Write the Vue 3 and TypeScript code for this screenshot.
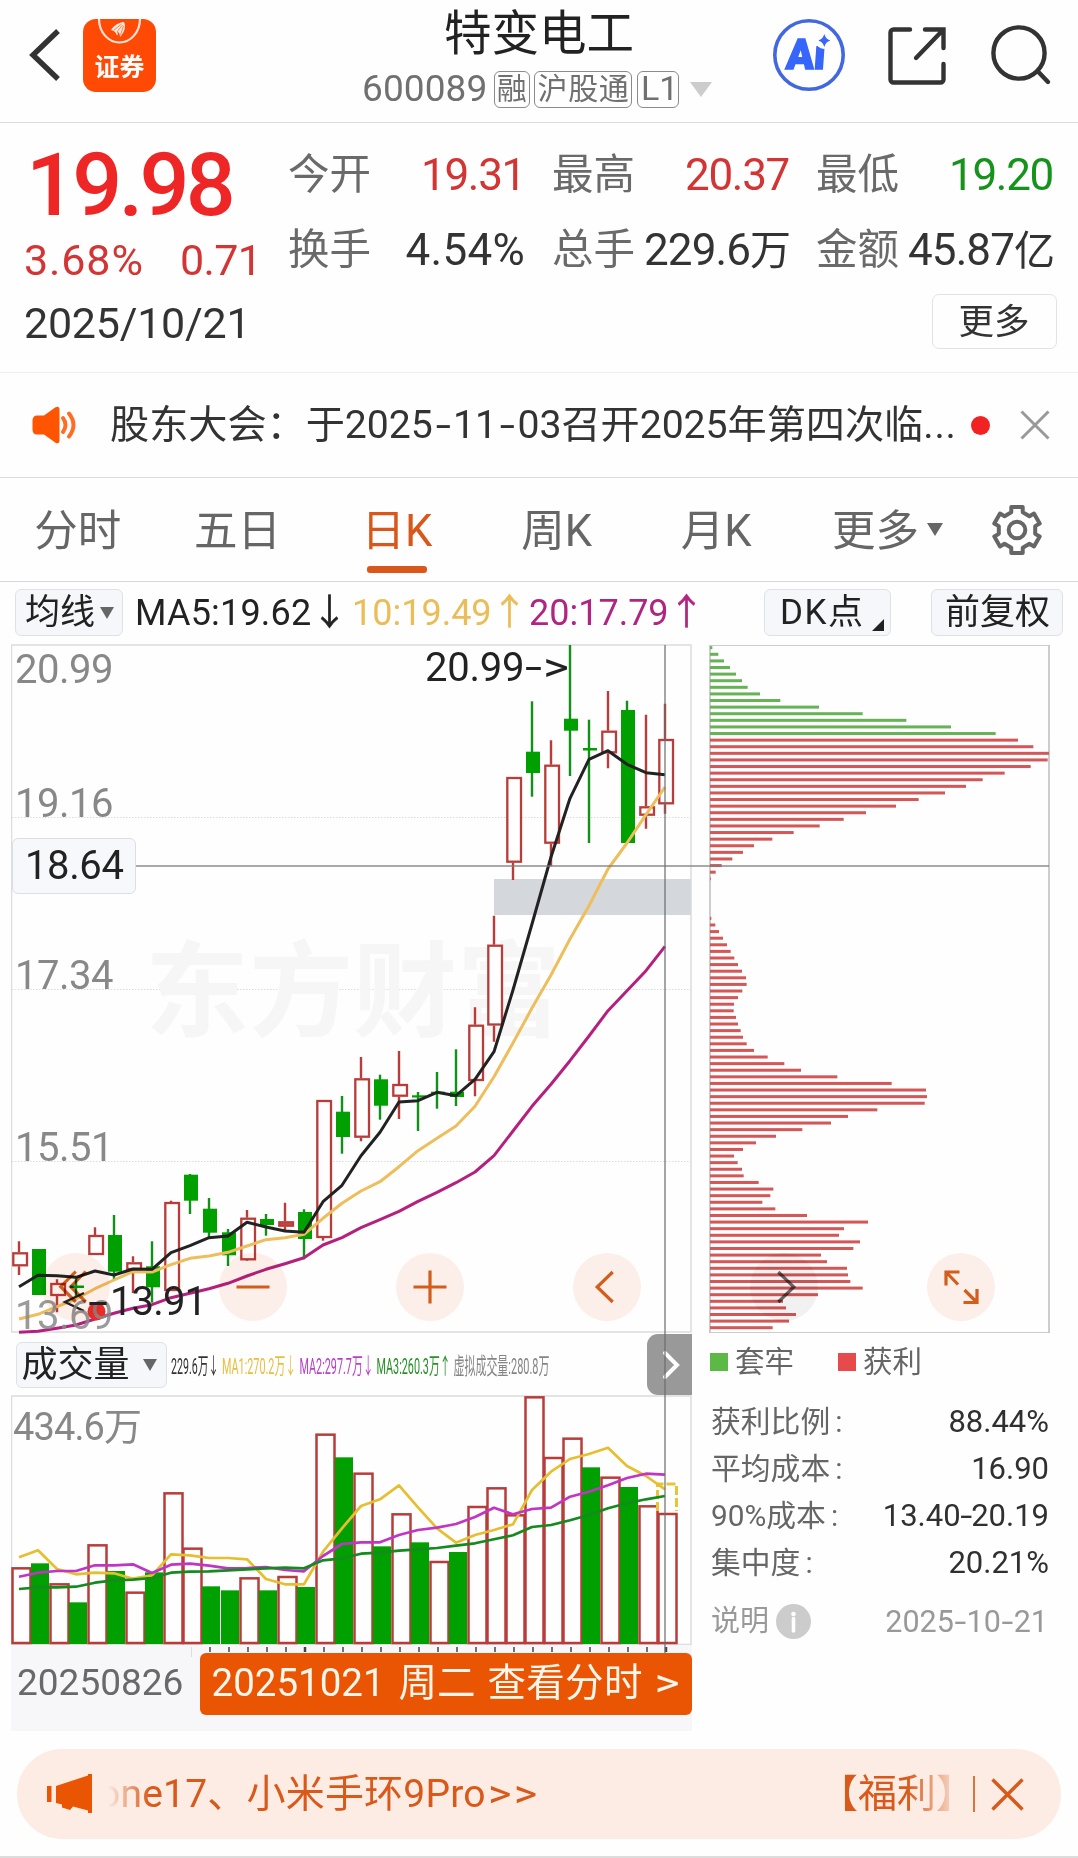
<script setup lang="ts">
type Kind = 'r' | 'g'
type Candle = [Kind, number, number, number, number]

const STEP = 19
const X0 = 19
const cx = (i: number): number => X0 + STEP * i

// kind, high, body top, body bottom, low
const candles: Candle[] = [
  ['r', 1241.3, 1252.3, 1266.3, 1275], ['g', 1249, 1249, 1295, 1295], ['r', 1279.3, 1283, 1296, 1312.3],
  ['g', 1276, 1285.5, 1288, 1297], ['r', 1227.3, 1235, 1255, 1255], ['g', 1215, 1235, 1271.7, 1279],
  ['r', 1256.3, 1262.3, 1270, 1293], ['g', 1241.3, 1266.3, 1287.3, 1302.7], ['r', 1200.7, 1202, 1291, 1291],
  ['g', 1174, 1174.7, 1200.7, 1214], ['g', 1198, 1208.7, 1232.7, 1238], ['g', 1229, 1232.3, 1255.3, 1266],
  ['r', 1210, 1217.7, 1260.3, 1261], ['g', 1214, 1219, 1225, 1235.7], ['r', 1202.7, 1221.3, 1226.7, 1230],
  ['g', 1209.3, 1212, 1239, 1259.3], ['r', 1100, 1100, 1238, 1240.7], ['g', 1096, 1111.7, 1137, 1153.7],
  ['r', 1057, 1078.3, 1137.7, 1141.3], ['g', 1074.7, 1079.3, 1105.7, 1119.7], ['r', 1051, 1084, 1096.7, 1119],
  ['g', 1092, 1095.3, 1097.5, 1131], ['g', 1072, 1091.7, 1093.7, 1108.7], ['g', 1049.3, 1091.7, 1097, 1106],
  ['r', 1007.3, 1024.7, 1081, 1096.3], ['r', 915.7, 944.7, 1025.5, 1041.7], ['r', 777, 777, 862.7, 880],
  ['g', 701.3, 751.7, 773, 796.7], ['r', 740.3, 764.7, 843.7, 866.3], ['g', 645, 718.7, 730.7, 776],
  ['g', 719.7, 748, 750.5, 843], ['r', 691, 730.7, 753.3, 768.3], ['g', 700.7, 710, 843, 843],
  ['r', 714.7, 806.3, 815.7, 828.7], ['r', 703.7, 739, 804.3, 813.7],
]

const ma5 = [1286.7, 1275.3, 1275.7, 1277.3, 1271, 1275, 1269, 1269.3, 1252.7, 1245.7, 1237.7, 1236, 1222.3, 1227, 1231, 1232.3, 1201.7, 1185.3, 1155.7, 1132.3, 1102, 1100.7, 1092.3, 1095.7, 1079.3, 1051.7, 990, 924, 857, 798.3, 759.3, 750.7, 764.3, 772.7, 774.7]
const ma10 = [1319, 1314.3, 1306.7, 1299, 1288.7, 1280, 1271.7, 1272, 1264.7, 1258.3, 1256, 1252.3, 1246, 1239.7, 1237.7, 1234.3, 1218.3, 1203.3, 1191, 1181.7, 1166.7, 1150.7, 1138.3, 1126, 1106.3, 1076.7, 1043, 1008, 975, 939, 905.7, 869, 843, 814.7, 787]
const ma20 = [1332.3, 1331.3, 1328.3, 1325, 1319, 1313.3, 1308.3, 1304.7, 1297.7, 1293.3, 1288.7, 1283.3, 1276, 1269.3, 1263.7, 1257.7, 1245, 1237.7, 1227.7, 1219.7, 1211.3, 1201.3, 1192.3, 1182.7, 1172, 1155.7, 1131, 1106.3, 1084.3, 1060.7, 1036, 1010.7, 990.7, 970.7, 946.3]

// volume values are thirds of a pixel below the y = 1380 line
const vy = (v: number): number => 1380 + v / 3
const volKinds = 'rgrgrgrgrrggrgrgrgrgrgrgrrrrrrgrgrr'
const volTops = [562, 550, 610, 667, 493, 573, 635, 577, 337, 503, 619, 631, 592, 631, 588, 621, 161, 232, 278, 499, 400, 487, 543, 516, 378, 322, 403, 49, 231, 173, 262, 290, 321, 376, 399]
const vma1 = [532, 511, 567, 583, 578, 580, 596, 586, 523, 526, 534, 534, 538, 597, 613, 613, 515, 445, 378, 358, 316, 382, 445, 488, 465, 450, 433, 330, 275, 237, 222, 203, 258, 288, 328]
const vma2 = [590, 578, 573, 573, 556, 556, 553, 579, 554, 551, 557, 565, 564, 561, 570, 574, 528, 492, 487, 487, 465, 450, 443, 432, 411, 383, 403, 387, 383, 350, 335, 316, 294, 281, 284]
const vma3 = [627, 622, 622, 620, 608, 601, 599, 594, 578, 575, 574, 571, 568, 565, 563, 565, 541, 535, 521, 518, 512, 508, 504, 497, 490, 478, 466, 441, 435, 421, 405, 385, 370, 358, 348]

const pts = (ys: number[]): string => ys.map((y, i) => `${cx(i)},${y.toFixed(1)}`).join(' ')
const vpts = (vs: number[]): string => pts(vs.map(vy))

const vols = volTops.map((v, i) => ({ kind: volKinds[i], x: 11.5 + STEP * i, y: vy(v), h: 1644 - vy(v) }))

const chipEnds = [
  37, 55, 72, 90, 108, 126, 143, 180, 241, 357, 488, 619, 753, 887,
  954, 1000, 1047, 1043, 992, 914, 848, 798, 735, 656, 588, 498, 431, 359, 281, 217, 162, 129, 97, 65, 47, 32,
  30, 30, 30, 30, 30,
  34, 46, 57, 69, 81, 92, 103, 114, 126, 138, 140, 127, 114, 102, 101, 108, 114, 122, 129, 140, 162, 203, 253, 303,
  412, 575, 678, 681, 674, 532, 444, 393, 307, 228, 168, 129, 102, 113, 126, 131, 176, 220, 211, 187, 226, 321,
  504, 432, 417, 480, 460, 363, 381, 441, 444, 451, 488, 354, 249, 258, 288, 267, 218,
]
const chips = chipEnds.map((e, i) => ({ w: (e - 30) / 3, y: 646.2 + 6.602 * i, trapped: i < 14 }))

const ticks = Array.from({ length: 25 }, (_, k) => k + 10)

const axis: [string, number][] = [['20.99', 683], ['19.16', 816.7], ['17.34', 988.7], ['15.51', 1161]]

const quotes = [
  [{ k: '今开', v: '19.31', c: 'up' }, { k: '换手', v: '4.54%', c: 'wide' }],
  [{ k: '最高', v: '20.37', c: 'up' }, { k: '总手', v: '229.6', u: '万', c: '' }],
  [{ k: '最低', v: '19.20', c: 'down' }, { k: '金额', v: '45.87', u: '亿', c: '' }],
] as { k: string; v: string; u?: string; c: string }[][]

const tabs = ['分时', '五日', '日K', '周K', '月K']

const volTexts = [
  { t: '229.6万↓', x: 171, w: 48, c: '#333' },
  { t: 'MA1:270.2万↓', x: 222, w: 74, c: '#e8be40' },
  { t: 'MA2:297.7万↓', x: 299.5, w: 74, c: '#bb3fc4' },
  { t: 'MA3:260.3万↑', x: 376.5, w: 74, c: '#2a9129' },
  { t: '虚拟成交量:280.8万', x: 453.5, w: 96, c: '#858585' },
]

const stats = [
  { k: '获利比例', v: ['88.44%'] },
  { k: '平均成本', v: ['16.90'] },
  { k: '90%成本', v: ['13.40', '20.19'] },
  { k: '集中度', v: ['20.21%'] },
]

const gear = (() => {
  const out: string[] = []
  for (let k = 0; k < 6; k++) {
    const base = -90 + k * 60
    for (const [d, r] of [[-18, 18.6], [-14, 23.6], [14, 23.6], [18, 18.6]] as const) {
      const a = ((base + d) * Math.PI) / 180
      out.push(`${(26 + r * Math.cos(a)).toFixed(2)},${(26 + r * Math.sin(a)).toFixed(2)}`)
    }
  }
  return out.join(' ')
})()
</script>

<template>
  <main class="page">
    <header class="top">
      <svg class="back" width="34" height="56" viewBox="28 27 34 56"><path d="M58 31 33 55l25 24" fill="none" stroke="#333" stroke-width="5.400" /></svg>
      <svg class="logo" width="73" height="73" viewBox="0 0 73 73">
        <rect width="73" height="73" rx="13" fill="#ff4a05" />
        <path d="M16 0a20.5 23.5 0 0 0 41 0" fill="none" stroke="#ffe3d4" stroke-width="2.2" />
        <path d="M28 11c3-5 8-7.500 13-8 2 4 1 10-4 15 0-3-1-5-3-5.500 1 2 1 3 0 4-1-3-3-5-6-5.500z" fill="#ffe9de" />
        <path d="M30.500 11.500l8-6.500M34 13l5.500-7M37.500 16l3-9" stroke="#ff6a30" stroke-width=".8" />
        <text x="36.5" y="57" text-anchor="middle" font-size="25" font-weight="700" fill="#fff">证券</text>
      </svg>
      <div class="name">
        <h1>特变电工</h1>
        <div class="code">
          <span class="num">600089</span><span class="tag">融</span><span class="tag wide">沪股通</span><span class="tag l1">L1</span>
          <svg width="22" height="15" viewBox="0 0 22 15"><path d="M0 0h22L11 15z" fill="#ccc" /></svg>
        </div>
      </div>
      <div class="tools">
        <svg width="74" height="74" viewBox="0 0 74 74">
          <circle cx="37" cy="37" r="34.2" fill="none" stroke="#4268e0" stroke-width="3.6" />
          <text x="14" y="51.500" font-family="Inter" font-weight="900" font-size="42" fill="#3666fb" stroke="#3666fb" stroke-width="1.600" textLength="39" lengthAdjust="spacingAndGlyphs" transform="skewX(-4) translate(3 0)">Ai</text>
          <circle cx="52" cy="22.5" r="8.4" fill="#fefefe" />
          <path d="M52.3 16q1.300 5.200 6 6.500-4.700 1.300-6 6.500-1.300-5.200-6-6.500 4.700-1.300 6-6.500z" fill="#3666fb" />
        </svg>
        <svg width="60" height="60" viewBox="0 0 60 60" fill="none" stroke="#333" stroke-width="4.400" stroke-linecap="round">
          <path d="M23 3.500H6.500a3 3 0 0 0-3 3v47a3 3 0 0 0 3 3h47a3 3 0 0 0 3-3V38M38 3.500h18.500V22M56 4 29 32" />
        </svg>
        <svg width="62" height="62" viewBox="0 0 62 62" fill="none" stroke="#333" stroke-width="4.400" stroke-linecap="round">
          <circle cx="29" cy="29" r="25.600" /><path d="M47.500 47 58 58" />
        </svg>
      </div>
    </header>

    <section class="quote">
      <div class="main">
        <div class="price">19.98</div>
        <div class="delta"><span>3.68%</span><span>0.71</span></div>
        <div class="day">2025/10/21</div>
      </div>
      <div class="side">
        <div class="cols">
          <div v-for="(col, i) in quotes" :key="i" class="col">
            <div v-for="q in col" :key="q.k" class="kv">
              <span class="k">{{ q.k }}</span>
              <span class="v" :class="q.c">{{ q.v }}<em v-if="q.u">{{ q.u }}</em></span>
            </div>
          </div>
        </div>
        <button class="more">更多</button>
      </div>
    </section>

    <section class="notice">
      <svg width="46" height="38" viewBox="0 0 46 38">
        <path d="M5 9.500h7L23.500 1.300C26 0 27.500 1 27.500 3.500v31c0 2.500-1.500 3.500-4 2.200L12 28.500H5c-3 0-4.500-2-4.500-5v-9c0-3 1.500-5 4.500-5z" fill="#ff5500" />
        <path d="M31 12q5 7 0 14M37 7.500q9 11.500 0 23" fill="none" stroke="#ff6c22" stroke-width="3.900" stroke-linecap="round" />
      </svg>
      <p>股东大会：于2025<i>-</i>11<i>-</i>03召开2025年第四次临<b>...</b></p>
      <span class="dot"></span>
      <svg width="30" height="30" viewBox="0 0 30 30"><path d="M1.500 1.500l27 27M28.500 1.500l-27 27" stroke="#999" stroke-width="3" /></svg>
    </section>

    <nav class="tabs">
      <a v-for="t in tabs" :key="t" :class="{ on: t === '日K' }">{{ t }}</a>
      <a class="drop">更多<svg width="16" height="13" viewBox="0 0 16 13"><path d="M0 0h16L8 13z" fill="#666" /></svg></a>
      <svg class="gear" width="52" height="52" viewBox="0 0 52 52" fill="none" stroke="#666" stroke-width="4">
        <polygon :points="gear" stroke-linejoin="round" /><circle cx="26" cy="26" r="8.300" />
      </svg>
    </nav>

    <section class="ind">
      <button class="chip avg">均线<svg width="14" height="12" viewBox="0 0 14 12"><path d="M0 0h14L7 12z" fill="#666" /></svg></button>
      <span class="m1">MA5:19.62<i>↓</i></span>
      <span class="m2">10:19.49<i>↑</i></span>
      <span class="m3">20:17.79<i>↑</i></span>
      <button class="chip dk"><span>DK</span>点<svg width="12" height="12" viewBox="0 0 12 12"><path d="M12 0v12H0z" fill="#222" /></svg></button>
      <button class="chip fq">前复权</button>
    </section>

    <section class="board">
      <div class="left">
        <svg class="blk" width="681" height="690" viewBox="11 644 681 690">
          <rect x="11.500" y="645" width="679.500" height="687" fill="none" stroke="#dedede" stroke-width="1.600" />
          <g stroke="#dcdcdc" stroke-dasharray="1.500 1.500"><path d="M12 817.500H691M12 989.500H691M12 1161.500H691" /></g>
          <text x="145" y="1029" font-size="104" font-weight="700" fill="#f6f6f6" textLength="416">东方财富</text>
          <rect x="494" y="879" width="197" height="36" fill="#d4d7dc" />
          <g v-for="(c, i) in candles" :key="i">
            <template v-if="c[0] === 'r'">
              <path :d="`M${cx(i)} ${c[1]}V${c[2]}M${cx(i)} ${c[3]}V${c[4]}`" stroke="#b83c3a" stroke-width="2.400" />
              <rect :x="cx(i) - 5.700" :y="c[2] + 1" width="13.700" :height="Math.max(2, c[3] - c[2] - 2)" :fill="i === 14 ? '#d04a48' : '#fefefe'" stroke="#b83c3a" stroke-width="2.300" />
            </template>
            <template v-else>
              <path :d="`M${cx(i)} ${c[1]}V${c[4]}`" stroke="#12911a" stroke-width="2.400" />
              <rect :x="cx(i) - 6" :y="c[2]" width="14" :height="c[3] - c[2]" fill="#00a000" />
            </template>
          </g>
          <g fill="none" stroke-width="3" stroke-linejoin="round">
            <polyline :points="pts(ma20)" stroke="#b5207f" />
            <polyline :points="pts(ma10)" stroke="#eebe5c" />
            <polyline :points="pts(ma5)" stroke="#222" />
          </g>
          <g font-size="40" fill="#888">
            <text v-for="a in axis" :key="a[0]" x="15" :y="a[1]" textLength="98.500">{{ a[0] }}</text>
          </g>
          <g font-size="40" fill="#222">
            <text x="425" y="680.700" textLength="99.500">20.99</text>
            <text x="525" y="680.700" textLength="17" lengthAdjust="spacingAndGlyphs">-</text>
            <text x="543" y="680.700" textLength="26" lengthAdjust="spacingAndGlyphs">&gt;</text>
          </g>
          <path d="M84 1293 65 1302l19 9" fill="none" stroke="#222" stroke-width="2.400" />
          <circle cx="96.500" cy="1311.500" r="9" fill="#ec2a28" />
          <text x="15" y="1329" font-size="40" fill="#888" fill-opacity=".85" textLength="98.500">13.69</text>
          <g font-size="40" fill="#222">
            <text x="88" y="1315.500" textLength="20" lengthAdjust="spacingAndGlyphs">-</text>
            <text x="110" y="1314.700" textLength="97">13.91</text>
          </g>
        </svg>

        <div class="volbar">
          <button class="chip vol">成交量<svg width="14" height="12" viewBox="0 0 14 12"><path d="M0 0h14L7 12z" fill="#666" /></svg></button>
          <svg width="476" height="40" viewBox="170 1344 476 40">
            <text v-for="v in volTexts" :key="v.t" :x="v.x" y="1373" :textLength="v.w" :fill="v.c" lengthAdjust="spacingAndGlyphs" font-size="22.500">{{ v.t }}</text>
          </svg>
          <div class="handle"><svg width="18" height="30" viewBox="0 0 18 30"><path d="M3 3l12 12L3 27" fill="none" stroke="#fff" stroke-width="4" stroke-linecap="round" /></svg></div>
        </div>

        <svg class="blk" width="681" height="250" viewBox="11 1395 681 250">
          <rect x="11.500" y="1396" width="679.500" height="248.500" fill="none" stroke="#dedede" stroke-width="1.600" />
          <g v-for="(v, i) in vols" :key="i">
            <rect v-if="v.kind === 'r'" :x="v.x + 1" :y="v.y + 1" width="18" :height="v.h - 2" fill="#fefefe" stroke="#b83c3a" stroke-width="2.500" />
            <rect v-else :x="v.x + 0.500" :y="v.y" width="18" :height="v.h" fill="#00a000" />
          </g>
          <path d="M657.500 1511v-27h19v27" fill="none" stroke="#e8c534" stroke-width="3" stroke-dasharray="9 3" />
          <g fill="none" stroke-width="2.700" stroke-linejoin="round">
            <polyline :points="vpts(vma1)" stroke="#e6bf30" />
            <polyline :points="vpts(vma2)" stroke="#c035c4" />
            <polyline :points="vpts(vma3)" stroke="#158a1e" />
          </g>
          <text x="13" y="1439.500" font-size="38" fill="#888" textLength="129">434.6万</text>
        </svg>

        <div class="strip">
          <svg class="ticks" width="681" height="12" viewBox="11 1645 681 12">
            <path d="M191.500 1647v10" stroke="#ddd" />
            <path v-for="k in ticks" :key="k" :d="`M${cx(k) + 1} 1647v5`" stroke="#444" :stroke-width="k === 15 || k === 34 ? 2.500 : 1.500" />
          </svg>
          <span class="from">20250826</span>
          <button class="go"><span class="d">20251021</span><span>周二</span><span>查看分时</span><span class="gt">&gt;</span></button>
        </div>
      </div>

      <div class="right">
        <svg class="blk" width="342" height="690" viewBox="709 644 342 690">
          <path d="M709 645.500h341M709 1332.500h341" stroke="#ccc" />
          <path d="M710 645v688M1049 645v688" stroke="#c8c8c8" stroke-width="1.800" />
          <rect v-for="(c, i) in chips" :key="i" x="710" :y="c.y" :width="c.w" height="3" :fill="c.trapped ? '#67b255' : '#d45656'" />
        </svg>
        <div class="legend"><i class="g"></i><span>套牢</span><i class="r"></i><span>获利</span></div>
        <dl class="stats">
          <div v-for="s in stats" :key="s.k"><dt>{{ s.k }}<b>:</b></dt><dd>{{ s.v[0] }}<template v-if="s.v[1]"><i>-</i>{{ s.v[1] }}</template></dd></div>
          <div class="note">
            <dt>说明<svg width="35" height="35" viewBox="0 0 35 35"><circle cx="17.500" cy="17.500" r="17.500" fill="#ccc" /><circle cx="17.500" cy="10" r="2.300" fill="#fff" /><path d="M17.500 14.500V27" stroke="#fff" stroke-width="3.600" stroke-linecap="round" /></svg></dt>
            <dd>2025<i>-</i>10<i>-</i>21</dd>
          </div>
        </dl>
      </div>

      <span class="hline"></span>
      <span class="vline"></span>
      <span class="cursor">18.64</span>
      <div class="ctl">
        <button><svg width="68" height="68" viewBox="42 1253 68 68"><path d="M75.700 1271.500l-15 15.200 15 15.200M85.700 1271.500l-15 15.200 15 15.200" /></svg></button>
        <button><svg width="68" height="68" viewBox="0 0 68 68"><path d="M17.500 34h33" /></svg></button>
        <button><svg width="68" height="68" viewBox="0 0 68 68"><path d="M17.500 34h33M34 17.500v33" /></svg></button>
        <button><svg width="68" height="68" viewBox="0 0 68 68"><path d="M39.700 19 24.200 34l15.500 15" /></svg></button>
        <button class="off"><svg width="68" height="68" viewBox="0 0 68 68"><path d="M28.300 19 43.800 34 28.300 49" /></svg></button>
        <button><svg width="68" height="68" viewBox="0 0 68 68"><path d="M32.500 19H19v13.500M19 19l12 12.500M50 36v13.500H36.500M50 49.500 37.500 37" /></svg></button>
      </div>
    </section>

    <section class="banner">
      <svg width="46" height="40" viewBox="47 1774 46 40" fill="#ea5504"><path d="M47 1786h4.500v16H47zM56 1786l32-10.500V1774h4v39h-4v-2.500l-15-4-3 3.500-8-2.500v-3l-6-1.500z" /></svg>
      <p class="msg">one17、小米手环9Pro<b>&gt;&gt;</b></p>
      <p class="perk">【福利】</p>
      <span class="bar"></span>
      <svg width="33" height="33" viewBox="0 0 33 33"><path d="M1.500 1.500l30 30M31.500 1.500l-30 30" stroke="#d9591a" stroke-width="3.400" /></svg>
    </section>
    <div class="end"></div>
  </main>
</template>

<style>
body { margin: 0; background: #fefefe; }
</style>

<style scoped>
* { box-sizing: border-box; }
.page { width: 1078px; height: 1858px; overflow: hidden; background: #fefefe; color: #333; font-family: Roboto, "Noto Sans CJK SC", sans-serif; display: flex; flex-direction: column; }
svg { flex: none; display: block; }
svg text { font-family: Roboto, "Noto Sans CJK SC", sans-serif; }
button { font: inherit; color: inherit; border: 0; padding: 0; margin: 0; background: none; }
i, em { font-style: normal; }
p, h1, dl, dd { margin: 0; }

.top { height: 123px; flex: none; border-bottom: 1.500px solid #dcdcdc; display: flex; align-items: flex-start; }
.back { margin: 27px 0 0 28px; }
.logo { margin: 19px 0 0 21px; }
.name { width: 352px; margin-left: 206px; display: flex; flex-direction: column; align-items: flex-start; }
h1 { font-size: 47.500px; font-weight: 400; line-height: 60px; margin: 4px 0 0 82px; color: #222; white-space: nowrap; }
.code { display: flex; align-items: center; height: 38px; margin-top: 6px; color: #707070; white-space: nowrap; }
.num { font-size: 37px; line-height: 38px; width: 131.500px; letter-spacing: .1px; }
.tag { height: 37px; border: 1.500px solid #8a8a8a; border-radius: 6px; font-size: 30px; line-height: 34px; padding: 0 2.200px; margin-right: 4.500px; }
.tag.wide { width: 98px; letter-spacing: .600px; }
.tag.l1 { width: 42px; font-size: 34px; padding: 0 3px; margin-right: 11px; line-height: 32px; }
.tools { display: flex; align-items: flex-start; margin-left: 57px; }
.tools svg:nth-child(1) { margin: 18px 0 0 1px; }
.tools svg:nth-child(2) { margin: 26px 0 0 41px; }
.tools svg:nth-child(3) { margin: 24px 0 0 43px; }

.quote { height: 250px; flex: none; border-bottom: 1.500px solid #eee; display: flex; }
.main { width: 288px; padding: 21px 0 0 25px; }
.price { font-size: 88px; font-weight: 500; line-height: 82px; color: #ee2626; letter-spacing: -3.700px; padding-left: 1px; margin-top: 0; }
.delta { display: flex; font-size: 43px; line-height: 50px; color: #d23534; margin: 9px 0 0 -1px; }
.delta span { letter-spacing: .900px; width: 156px; }
.delta span + span { width: auto; letter-spacing: -.600px; }
.day { font-size: 43px; line-height: 50px; letter-spacing: -.250px; margin: 13px 0 0 -1px; }
.side { width: 790px; display: flex; flex-direction: column; }
.cols { display: flex; gap: 27px; padding-top: 21.500px; height: 171px; }
.col { width: 237px; }
.kv { display: flex; justify-content: space-between; align-items: center; height: 60px; margin-bottom: 15.500px; line-height: 60px; }
.k { font-size: 41.500px; color: #6a6a6a; white-space: nowrap; }
.v { font-size: 44px; letter-spacing: -.900px; white-space: nowrap; }
.v.up, .v.down { letter-spacing: -1.300px; }
.v.wide { letter-spacing: .300px; }
.v em { font-size: 41px; letter-spacing: 0; margin-right: -2px; }
.up { color: #d23534; }
.down { color: #15931a; }
.more { align-self: flex-start; margin-left: 643.500px; width: 125px; height: 55px; border: 1.500px solid #e3e3e3; border-radius: 7px; font-size: 35.500px; line-height: 52px; }

.notice { height: 105px; flex: none; border-bottom: 1.500px solid #dcdcdc; display: flex; align-items: center; padding-left: 32px; }
.notice p { font-size: 39.200px; line-height: 50px; white-space: nowrap; width: 848px; margin-left: 32px; letter-spacing: -.050px; }
.notice i, .stats i { display: inline-block; width: .520em; text-align: center; transform: scaleX(1.400); }
.notice b { font-weight: 400; letter-spacing: .800px; }
.dot { width: 19px; height: 19px; border-radius: 50%; background: #f22222; margin: 0 0 0 12.500px; }
.dot + svg { margin-left: 30px; }

.tabs { height: 104px; flex: none; border-bottom: 1.500px solid #d8dada; display: flex; align-items: center; padding-left: 0; margin-left: -2px; color: #666; font-size: 43.500px; line-height: 60px; }
.tabs a { width: 159.600px; height: 100%; text-align: center; display: flex; flex-direction: column; align-items: center; padding-top: 24px; }
.tabs .on { color: #d9571a; }
.tabs .on::after { content: ""; width: 60px; height: 6.500px; border-radius: 3px; background: #d9571a; margin-top: 4px; }
.tabs .drop { flex-direction: row; align-items: flex-start; width: 157px; padding-left: 36px; white-space: nowrap; }
.drop svg { margin: 21px 0 0 8px; }
.gear { margin-left: 38.500px; }

.ind { height: 62px; flex: none; display: flex; align-items: flex-start; padding: 7px 0 0 15px; font-size: 36px; line-height: 48px; white-space: nowrap; }
.chip { height: 47px; border: 1.500px solid #dfe2e5; border-radius: 6px; background: #f5f7fa; color: #222; display: flex; align-items: center; font-size: 35px; line-height: 46px; white-space: nowrap; }
.ind .chip { padding-top: 1px; }
.avg { width: 108px; padding-left: 9px; }
.avg svg { margin-left: 5px; }
.ind i { display: inline-block; width: 36px; text-align: center; font-family: "Noto Sans CJK SC", sans-serif; line-height: 30px; -webkit-text-stroke: .5px; }
.m1 { color: #222; margin-left: 12px; width: 217px; letter-spacing: .200px; }
.m2 { color: #ebbd58; width: 177px; }
.m3 { color: #b02581; width: 235px; }
.dk { width: 127px; padding-left: 15px; position: relative; }
.dk span { letter-spacing: 1.500px; }
.dk svg { margin: 23px 0 0 9px; }
.fq { width: 132px; margin-left: 40px; padding-left: 13px; }

.board { position: relative; height: 1087px; flex: none; display: flex; padding-left: 11px; }
.left { width: 681px; }
.blk { display: block; }
.volbar { height: 61px; display: flex; align-items: center; padding-left: 4.500px; }
.vol { width: 151px; height: 46px; padding-left: 5px; font-size: 36px; }
.vol svg { margin-left: 13px; }
.volbar > svg { margin-left: 3.500px; }
.handle { width: 45px; height: 61px; margin-left: 1px; background: #999; border-radius: 11px 0 0 11px; display: flex; align-items: center; padding-left: 15px; }
.strip { position: relative; height: 86px; background: #f7f7fa; display: flex; align-items: flex-start; }
.ticks { position: absolute; left: 0; top: 0; }
.from { font-size: 37px; line-height: 50px; color: #696969; margin: 13px 0 0 6px; width: 182.500px; }
.go { width: 492px; height: 62px; margin-top: 8px; border-radius: 6px; background: #ea5504; color: #fff6ec; font-size: 38.500px; line-height: 60px; display: flex; padding-left: 12px; white-space: nowrap; }
.go span:nth-child(2) { margin-left: 15px; }
.go span:nth-child(3) { margin-left: 12px; letter-spacing: .300px; }
.go .d { font-size: 38.500px; width: 172px; }
.go .gt { margin-left: 14px; transform: scaleX(1.250); }

.right { width: 342px; margin-left: 17px; }
.legend { display: flex; align-items: center; height: 56px; padding-left: 1px; font-size: 29.500px; line-height: 40px; color: #666; }
.legend i { width: 18px; height: 18px; }
.legend .g { background: #5cb946; }
.legend .r { background: #e64a4a; margin-left: 43px; }
.legend span { margin-left: 7px; width: 60px; }
.stats { padding: 8px 2px 0 2px; color: #666; }
.stats div { display: flex; justify-content: space-between; align-items: center; height: 47.100px; font-size: 29.800px; line-height: 47px; white-space: nowrap; }
.stats dt b { font-weight: 400; margin-left: 5px; }
.stats dd { color: #303030; font-size: 31px; }
.stats dd i { width: .340em; }
.stats div.note { margin-top: 12px; color: #999; }
.stats .note dt { display: flex; align-items: center; font-size: 29px; }
.stats .note dt svg { margin-left: 7px; }
.stats .note dd { color: #999; font-size: 30.500px; padding-right: 1px; }
.stats .note dd i { width: .420em; }

.hline { position: absolute; left: 134px; top: 221px; width: 915px; height: 2px; background: rgba(120, 124, 122, .65); }
.vline { position: absolute; left: 664px; top: 1px; width: 2px; height: 1008px; background: rgba(105, 108, 107, .6); }
.cursor { position: absolute; left: 12px; top: 194px; width: 124px; height: 56px; border: 1.500px solid #dcdfe2; border-radius: 6px; background: #f6f8fb; color: #222; font-size: 40px; letter-spacing: -.400px; line-height: 53px; padding-left: 12px; }
.ctl { position: absolute; left: 42px; top: 609px; width: 953px; display: flex; justify-content: space-between; }
.ctl button { width: 68px; height: 68px; border-radius: 50%; background: #fdf0ea; mix-blend-mode: multiply; }
.ctl path { fill: none; stroke: #d25e1c; stroke-width: 3.2; }
.ctl .off { background: #f2f2f2; }
.ctl .off path { stroke: #666; }

.banner { width: 1044px; height: 90px; flex: none; margin: 18px 0 0 17px; border-radius: 45px; background: #fcece4; display: flex; align-items: center; padding-left: 30px; color: #d9591a; font-size: 39px; line-height: 60px; white-space: nowrap; }
.msg { width: 446px; margin-left: 15px; overflow: hidden; text-indent: -10px; letter-spacing: .200px; -webkit-mask-image: linear-gradient(90deg, transparent 0, #000 42px); mask-image: linear-gradient(90deg, transparent 0, #000 42px); }
.msg b { display: inline-block; text-indent: 0; font-weight: 400; letter-spacing: 2px; transform: scaleX(1.150); transform-origin: left; margin-left: 2px; }
.perk { width: 132px; margin-left: 265px; margin-right: 0; overflow: hidden; -webkit-mask-image: linear-gradient(90deg, #000 88px, transparent 142px); mask-image: linear-gradient(90deg, #000 88px, transparent 142px); }
.bar { width: 1.500px; height: 36px; background: #d9743f; margin-left: 22px; margin-right: 16px; }
.end { margin-top: 17px; height: 1.500px; background: #dcdcdc; }
</style>
